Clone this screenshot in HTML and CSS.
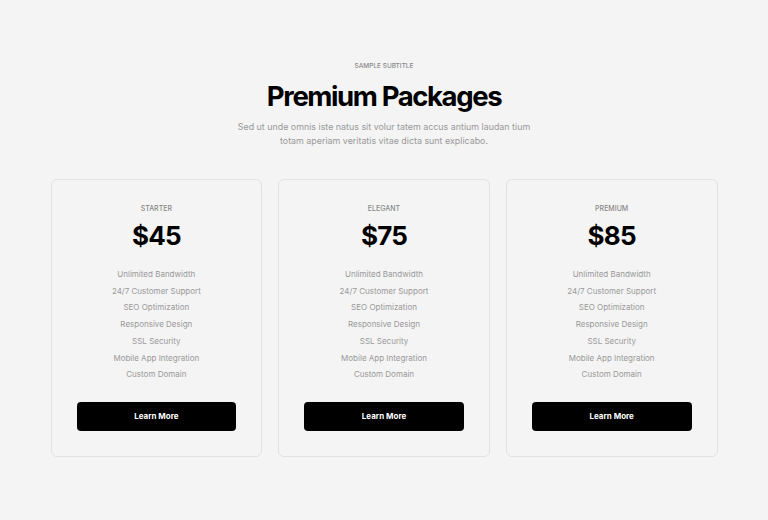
FILE: index.html
```html
<!DOCTYPE html>
<html lang="en">
<head>
  <meta charset="UTF-8" />
  <title>Premium Packages</title>
  <link rel="stylesheet" href="styles.css">
</head>
<body>
  <section class="pricing">
    <header class="pricing-head">
      <p class="subtitle">SAMPLE SUBTITLE</p>
      <h1>Premium Packages</h1>
      <p class="lead">Sed ut unde omnis iste natus sit volur tatem accus antium laudan tium totam aperiam veritatis vitae dicta sunt explicabo.</p>
    </header>

    <div class="plans">
      <div class="plan">
        <p class="plan-name">STARTER</p>
        <p class="price">$45</p>
        <ul class="features">
          <li>Unlimited Bandwidth</li>
          <li>24/7 Customer Support</li>
          <li>SEO Optimization</li>
          <li>Responsive Design</li>
          <li>SSL Security</li>
          <li>Mobile App Integration</li>
          <li>Custom Domain</li>
        </ul>
        <button class="btn" type="button">Learn More</button>
      </div>

      <div class="plan">
        <p class="plan-name">ELEGANT</p>
        <p class="price">$75</p>
        <ul class="features">
          <li>Unlimited Bandwidth</li>
          <li>24/7 Customer Support</li>
          <li>SEO Optimization</li>
          <li>Responsive Design</li>
          <li>SSL Security</li>
          <li>Mobile App Integration</li>
          <li>Custom Domain</li>
        </ul>
        <button class="btn" type="button">Learn More</button>
      </div>

      <div class="plan">
        <p class="plan-name">PREMIUM</p>
        <p class="price">$85</p>
        <ul class="features">
          <li>Unlimited Bandwidth</li>
          <li>24/7 Customer Support</li>
          <li>SEO Optimization</li>
          <li>Responsive Design</li>
          <li>SSL Security</li>
          <li>Mobile App Integration</li>
          <li>Custom Domain</li>
        </ul>
        <button class="btn" type="button">Learn More</button>
      </div>
    </div>
  </section>
</body>
</html>
```

FILE: styles.css
```css
body {
  margin: 0;
  background: #f4f4f4;
  font-family: Inter, "Noto Sans", sans-serif;
  color: #000;
}
.pricing {
  width: 667px;
  margin: 0 auto;
  padding-top: 61px;
}
.pricing-head {
  text-align: center;
}
.subtitle {
  margin: 0;
  font-size: 6.5px;
  line-height: 10px;
  color: #888;
  font-weight: 500;
}
h1 {
  margin: 8px 0 0;
  font-size: 27.5px;
  line-height: 34px;
  font-weight: 700;
  letter-spacing: -1.4px;
}
.lead {
  width: 296px;
  margin: 7px auto 0;
  font-size: 8.9px;
  line-height: 14px;
  color: #999;
}
.plans {
  display: flex;
  gap: 16px;
  margin-top: 31px;
}
.plan {
  flex: 1;
  border: 1px solid #e2e2e2;
  border-radius: 6px;
  padding: 24px 25px 25px;
  text-align: center;
}
.plan-name {
  margin: 0;
  font-size: 7px;
  line-height: 10px;
  color: #888;
  font-weight: 500;
}
.price {
  margin: 5px 0 0;
  font-size: 26px;
  line-height: 34px;
  font-weight: 700;
  letter-spacing: -0.8px;
}
.features {
  list-style: none;
  margin: 13px 0 0;
  padding: 0;
  font-size: 8px;
  line-height: 16.7px;
  color: #999;
}
.btn {
  display: block;
  width: 100%;
  height: 29px;
  margin-top: 19px;
  background: #000;
  color: #fff;
  border: none;
  border-radius: 4px;
  font-family: inherit;
  font-size: 8px;
  font-weight: 700;
  cursor: pointer;
}
```
